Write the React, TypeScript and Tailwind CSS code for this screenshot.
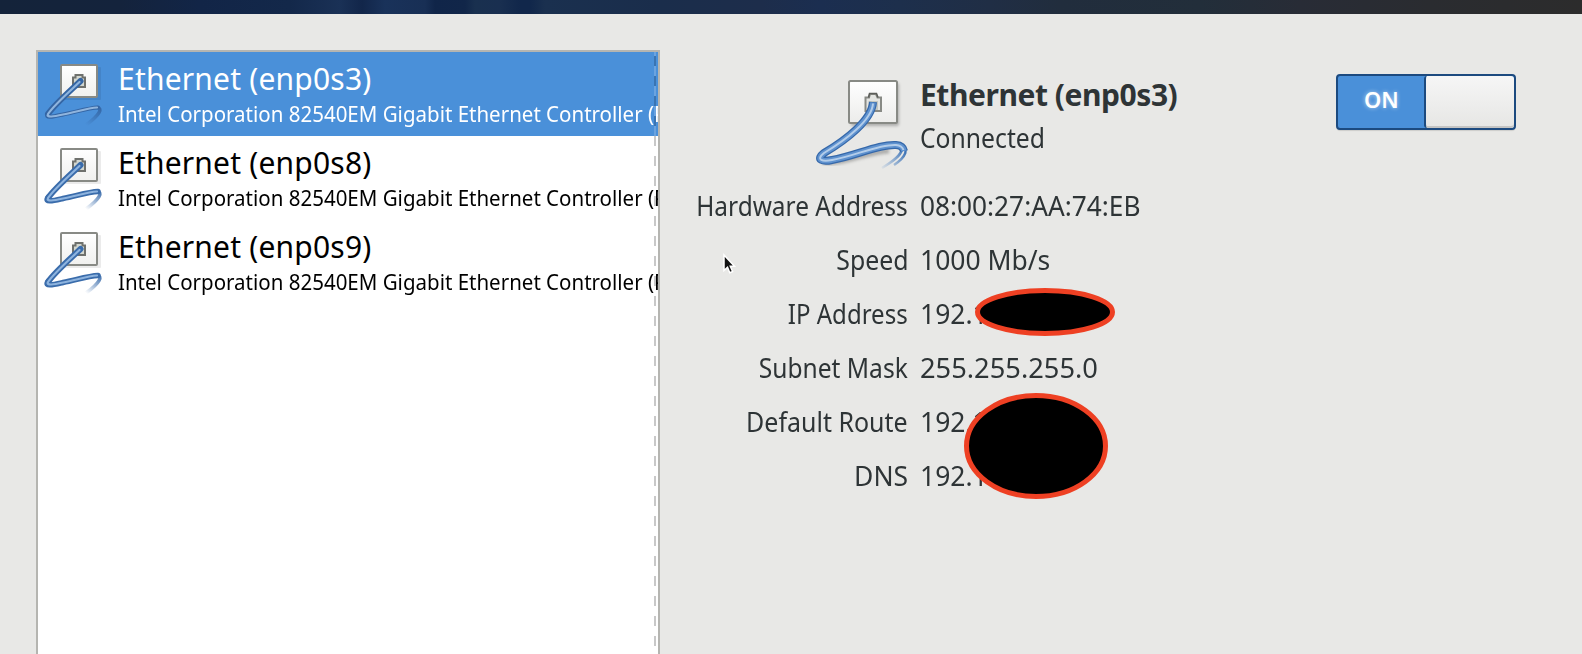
type Device = { name: string; selected: boolean };

const devices: Device[] = [
  { name: "Ethernet (enp0s3)", selected: true },
  { name: "Ethernet (enp0s8)", selected: false },
  { name: "Ethernet (enp0s9)", selected: false },
];

const details = [
  { label: "Hardware Address", value: "08:00:27:AA:74:EB", l: "scale-x-[0.905]", v: "scale-x-[0.972]" },
  { label: "Speed", value: "1000 Mb/s", l: "scale-x-[0.92]", v: "scale-x-[0.98]" },
  { label: "IP Address", value: "192.1", l: "scale-x-[0.89]", v: "scale-x-[0.98]" },
  { label: "Subnet Mask", value: "255.255.255.0", l: "scale-x-[0.91]", v: "scale-x-[1.01]" },
  { label: "Default Route", value: "192.1", l: "scale-x-[0.925]", v: "scale-x-[0.98]" },
  { label: "DNS", value: "192.1", l: "scale-x-[0.98]", v: "scale-x-[0.98]" },
];

function SmallJack({ selected }: { selected: boolean }) {
  const id = selected ? "tailSelected" : "tail";
  const edge = selected ? "#3465a4" : "#3a6cab";
  const core = selected ? "#8fb4dd" : "#8db3de";
  return (
    <svg className="mt-2 shrink-0" width="64" height="68" viewBox="0 0 64 68" fill="none">
      <defs>
        <linearGradient id={id} x1="57" y1="48" x2="44" y2="65" gradientUnits="userSpaceOnUse">
          <stop offset="0" stopColor={edge} stopOpacity="0.9" />
          <stop offset="1" stopColor={edge} stopOpacity="0" />
        </linearGradient>
        <linearGradient id={id + "Plate"} x1="0" y1="0" x2="0" y2="1">
          <stop offset="0" stopColor="#ffffff" />
          <stop offset="1" stopColor="#f0f0ee" />
        </linearGradient>
      </defs>
      <rect x="20" y="7" width="39" height="33" rx="1" fill="#000" opacity="0.08" />
      <rect x="19" y="5" width="36" height="32" rx="1" fill={`url(#${id}Plate)`} stroke="#888a85" strokeWidth="2" />
      <path d="M31 27V17.500h2.500V15h7v2.500H43V27z" fill="#d3d7cf" stroke="#6f716d" strokeWidth="2" />
      <path d="M38.500 21C28 31 12 45 6 54" stroke={edge} strokeWidth="6" strokeLinecap="round" />
      <path d="M6 53.500C2 59 12 56.500 21 54.500C34 52 46 48 56 47.500" stroke={edge} strokeWidth={selected ? 4 : 5.5} strokeLinecap="round" />
      <path d="M55 47.500C61 48 58 55 44 65" stroke={`url(#${id})`} strokeWidth="3.500" />
      <path d="M37.500 22C28 31 12 45 6 54C4 58 12 56.500 21 54.500C34 52 46 48 55 47.500" stroke={core} strokeWidth="2.200" strokeLinecap="round" />
    </svg>
  );
}

function LargeJack() {
  return (
    <svg className="shrink-0" width="104" height="100" viewBox="0 0 104 100" fill="none">
      <defs>
        <linearGradient id="fade" x1="92" y1="76" x2="70" y2="94" gradientUnits="userSpaceOnUse">
          <stop offset="0" stopColor="#3c72b5" />
          <stop offset="1" stopColor="#5d8fcb" stopOpacity="0.1" />
        </linearGradient>
        <linearGradient id="plate" x1="0" y1="0" x2="0" y2="1">
          <stop offset="0" stopColor="#ffffff" />
          <stop offset="1" stopColor="#ececea" />
        </linearGradient>
        <filter id="soft" x="-20%" y="-20%" width="140%" height="140%">
          <feGaussianBlur stdDeviation="1.5" />
        </filter>
      </defs>
      <rect x="39" y="9" width="48" height="43" rx="2" fill="#000" opacity="0.25" filter="url(#soft)" />
      <rect x="37" y="7" width="48" height="42" rx="1.500" fill="url(#plate)" stroke="#888a85" strokeWidth="2" />
      <path d="M53.500 37V23.500H57L58 20h6l1.500 3.500H69V37z" fill="#e4e5e2" stroke="#888a85" strokeWidth="2" />
      <path d="M56.500 23.500L57.500 19.500h7l1.500 4" stroke="#5b5d59" strokeWidth="1.500" />
      <path d="M56.500 36V27h9.500v9z" fill="#c4c7c0" />
      <path d="M11 88C25 92 55 78 77 77" stroke="#000" strokeOpacity="0.25" strokeWidth="5" filter="url(#soft)" />
      <path d="M88 71C98 74 94 83 82 91M90 75C89 82 80 88 70 94" stroke="url(#fade)" strokeWidth="2.500" />
      <path d="M61 28C60 46 34 66 12 79C3 86 11 88 20 86C43 82 67 70 84 71Q91 71.500 92 77" stroke="#3568aa" strokeWidth="8" strokeLinejoin="round" />
      <path d="M61 28.500C60 46 34 66 12 79C3 86 11 88 20 86C43 82 67 70 84 71Q91 71.500 92 77" stroke="#5f92cf" strokeWidth="5.500" strokeLinejoin="round" />
      <path d="M61 29.500C60 46 34 66 12 79C3 86 11 88 20 86C43 82 67 70 84 71Q90 71.500 91.500 76" stroke="#b3cdea" strokeWidth="2" strokeLinejoin="round" />
    </svg>
  );
}

function DeviceRow({ device }: { device: Device }) {
  return (
    <div className={device.selected ? "flex h-[84px] bg-[#4a90d9] pl-1 text-white" : "flex h-[84px] bg-white pl-1 text-black"}>
      <SmallJack selected={device.selected} />
      <div className="ml-[12px] min-w-0 grow pt-[6px]">
        <div className="text-[30px] leading-[42px] tracking-[0.2px] whitespace-nowrap">{device.name}</div>
        <div className="w-[700px] origin-left scale-x-[0.932] text-[22px] leading-[27px] whitespace-nowrap">
          Intel Corporation 82540EM Gigabit Ethernet Controller (PRO
        </div>
      </div>
    </div>
  );
}

function Switch() {
  return (
    <div role="switch" aria-checked="true" className="flex h-[56px] w-[180px] rounded-[4px] border-2 border-[#1c4a7f] bg-[#4a90d9] shadow-[0_2px_1px_-1px_rgba(0,0,0,0.12)]">
      <div className="grow pl-[26px] text-[22px] leading-[47px] font-semibold text-white [text-shadow:0_0_4px_rgba(255,255,255,0.6)]">ON</div>
      <div className="w-[90px] rounded-[3px] border-l-2 border-[#1c4a7f] bg-linear-to-b from-[#f6f6f6] to-[#e6e6e4] shadow-[inset_0_-2px_0_#c4c4c3]" />
    </div>
  );
}

export default function App() {
  return (
    <div className="relative flex h-[654px] w-[1582px] flex-col overflow-hidden bg-[#e8e8e6] font-['Noto_Sans','Open_Sans',sans-serif]">
      <div className="h-[14px] shrink-0 bg-[linear-gradient(90deg,#14233a_0px,#14233c_120px,#122547_200px,#13284a_290px,#1a3156_340px,#12264a_362px,#19325a_385px,#182f55_425px,#102549_435px,#112649_465px,#19304f_475px,#192f50_500px,#11274b_520px,#11274b_530px,#1a304f_545px,#1a2d4b_660px,#1d2d4b_760px,#1b2e50_820px,#1d2f4c_900px,#202e45_990px,#212d3d_1060px,#222e3a_1200px,#282c36_1300px,#2a2c30_1430px,#2c2c2c_1582px)]" />
      <div className="flex min-h-0 grow pt-9 pl-9">
        <div className="relative flex w-[624px] shrink-0 flex-col overflow-hidden border-x-2 border-t-2 border-[#b5b5b1] bg-white">
          {devices.map((d) => (
            <DeviceRow key={d.name} device={d} />
          ))}
          <div className="absolute top-0 right-[2px] h-[84px] w-[2px] bg-[repeating-linear-gradient(180deg,#6ba3df_0px,#6ba3df_4px,#3a74b2_4px,#3a74b2_14px,#6ba3df_14px,#6ba3df_20px)]" />
          <div className="absolute top-[84px] right-[2px] bottom-0 w-[2px] bg-[repeating-linear-gradient(180deg,#c8c8c8_0px,#c8c8c8_10px,transparent_10px,transparent_20px)]" />
        </div>
        <div className="flex grow flex-col text-[#2e3436]">
          <div className="flex h-[129px] pt-6">
            <div className="ml-[152px]">
              <LargeJack />
            </div>
            <div className="ml-[4px] w-[416px]">
              <div className="text-[30px] leading-[42px] font-bold tracking-[-0.45px]">Ethernet (enp0s3)</div>
              <div className="w-[200px] origin-left scale-x-[0.915] text-[27px] leading-[43px]">Connected</div>
            </div>
            <Switch />
          </div>
          <div className="flex flex-col">
            {details.map((d) => (
              <div key={d.label} className="flex h-[54px] items-center gap-[12px] text-[27px] leading-[36px] whitespace-nowrap">
                <div className="w-[248px] text-right">
                  <span className={`inline-block origin-right ${d.l}`}>{d.label}</span>
                </div>
                <span className={`origin-left ${d.v}`}>{d.value}</span>
              </div>
            ))}
          </div>
        </div>
      </div>
      <svg className="pointer-events-none absolute top-[286px] left-[960px]" width="160" height="216" viewBox="960 286 160 216">
        <ellipse cx="1045" cy="312" rx="67.500" ry="21.500" fill="#000" stroke="#ee4023" strokeWidth="5" />
        <ellipse cx="1036" cy="446" rx="69.500" ry="50.500" fill="#000" stroke="#ee4023" strokeWidth="5" />
      </svg>
      <svg className="pointer-events-none absolute top-[253px] left-[722px]" width="18" height="24" viewBox="0 0 18 24">
        <path d="M2 2v15.500l3.500-3.300 2.300 5.500 2.800-1.200-2.300-5.300H12.500z" fill="#111" stroke="#fff" strokeWidth="1.500" />
      </svg>
    </div>
  );
}
